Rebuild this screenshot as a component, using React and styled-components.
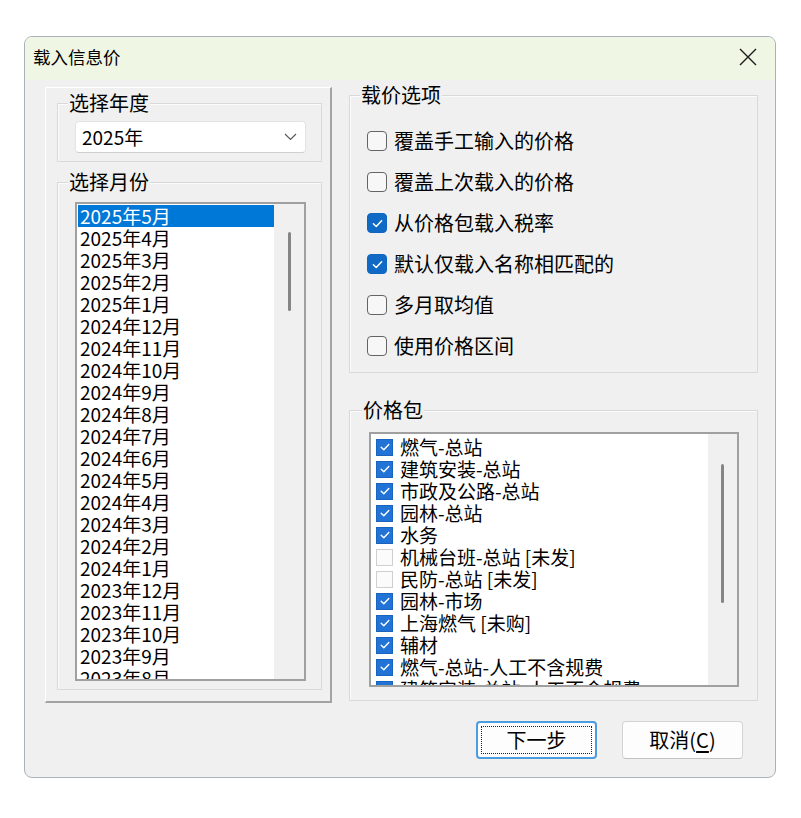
import React from 'react';
import styled, { createGlobalStyle } from 'styled-components';

// Data
const months = (() => {
	const list = [];
	let y = 2025;
	let m = 5;
	for (let i = 0; i < 24; i++) {
		list.push(`${ y }年${ m }月`);
		m -= 1;
		if (m === 0) { m = 12; y -= 1; }
	}
	return list;
})();

const options = [
	{ id: 1, text: '覆盖手工输入的价格', checked: false },
	{ id: 2, text: '覆盖上次载入的价格', checked: false },
	{ id: 3, text: '从价格包载入税率', checked: true },
	{ id: 4, text: '默认仅载入名称相匹配的', checked: true },
	{ id: 5, text: '多月取均值', checked: false },
	{ id: 6, text: '使用价格区间', checked: false },
];

const packs = [
	{ id: 1, text: '燃气-总站', checked: true },
	{ id: 2, text: '建筑安装-总站', checked: true },
	{ id: 3, text: '市政及公路-总站', checked: true },
	{ id: 4, text: '园林-总站', checked: true },
	{ id: 5, text: '水务', checked: true },
	{ id: 6, text: '机械台班-总站 [未发]', checked: false },
	{ id: 7, text: '民防-总站 [未发]', checked: false },
	{ id: 8, text: '园林-市场', checked: true },
	{ id: 9, text: '上海燃气 [未购]', checked: true },
	{ id: 10, text: '辅材', checked: true },
	{ id: 11, text: '燃气-总站-人工不含规费', checked: true },
	{ id: 12, text: '建筑安装-总站-人工不含规费', checked: true },
];

// Icons
const CheckMark = ({ size = 12 }) => (
	<svg width={ size } height={ size } viewBox="0 0 12 12">
		<path d="M2.2 6.3 L4.8 8.8 L9.8 3.4" fill="none" stroke="#fff" strokeWidth="1.4" strokeLinecap="round" strokeLinejoin="round" />
	</svg>
);

// Component
const App = () => {
	return(
		<>
			<GlobalStyle/>
			<Window>
				<TitleBar>
					<Title>载入信息价</Title>
					<CloseButton type="button">
						<svg width="18" height="18" viewBox="0 0 18 18">
							<path d="M1 1 L17 17 M17 1 L1 17" stroke="#1c1c1c" strokeWidth="1.4" />
						</svg>
					</CloseButton>
				</TitleBar>
				<Body>
					<TopRow>
						<LeftPanel>
							<YearGroup>
								<Legend>选择年度</Legend>
								<Combo>
									<span>2025年</span>
									<svg width="13" height="8" viewBox="0 0 13 8">
										<path d="M1 1 L6.5 6.5 L12 1" fill="none" stroke="#5a5a5a" strokeWidth="1.2" />
									</svg>
								</Combo>
							</YearGroup>
							<MonthGroup>
								<Legend>选择月份</Legend>
								<ListBox>
									<Items>
										{
											months.map((text, i) => (
												<MonthRow key={ text } $selected={ i === 0 }>{ text }</MonthRow>
											))
										}
									</Items>
									<ScrollTrack $top={ 28 }>
										<Thumb $height={ 79 }/>
									</ScrollTrack>
								</ListBox>
							</MonthGroup>
						</LeftPanel>
						<RightColumn>
							<OptionsGroup>
								<Legend>载价选项</Legend>
								<OptionList>
									{
										options.map((opt) => (
											<OptionRow key={ opt.id }>
												<RoundBox $checked={ opt.checked }>
													{ opt.checked && <CheckMark size={ 13 }/> }
												</RoundBox>
												{ opt.text }
											</OptionRow>
										))
									}
								</OptionList>
							</OptionsGroup>
							<PackGroup>
								<Legend>价格包</Legend>
								<ListBox>
									<Items $padLeft={ 5 } $padTop={ 2 }>
										{
											packs.map((pack) => (
												<PackRow key={ pack.id }>
													<SquareBox $checked={ pack.checked }>
														{ pack.checked && <CheckMark size={ 12 }/> }
													</SquareBox>
													{ pack.text }
												</PackRow>
											))
										}
									</Items>
									<ScrollTrack $top={ 30 } $width={ 29 }>
										<Thumb $height={ 139 }/>
									</ScrollTrack>
								</ListBox>
							</PackGroup>
						</RightColumn>
					</TopRow>
					<ButtonRow>
						<Button type="button" $default>
							<FocusRing>下一步</FocusRing>
						</Button>
						<Button type="button">
							<FocusRing $hidden>取消(<u>C</u>)</FocusRing>
						</Button>
					</ButtonRow>
				</Body>
			</Window>
		</>
	);
};

// Styled
const GlobalStyle = createGlobalStyle`
	html, body {
		margin: 0;
		background: #ffffff;
	}
	body {
		font-family: "Noto Sans CJK SC", "Noto Sans", sans-serif;
		color: #000;
	}
`;

const Window = styled.div`
	box-sizing: border-box;
	width: 752px;
	height: 742px;
	margin: 36px 0 0 24px;
	border: 1px solid #a9b1ba;
	border-radius: 8px;
	overflow: hidden;
	background: #f0f0f0;
	display: flex;
	flex-direction: column;
`;

const TitleBar = styled.div`
	box-sizing: border-box;
	height: 43px;
	flex: none;
	display: flex;
	align-items: center;
	justify-content: space-between;
	padding: 0 16px 3px 8px;
	background: #eff6e3;
`;

const Title = styled.div`
	font-size: 17.5px;
	line-height: 22px;
`;

const CloseButton = styled.button`
	display: flex;
	align-items: center;
	justify-content: center;
	width: 22px;
	height: 22px;
	padding: 0;
	border: none;
	background: transparent;
`;

const Body = styled.div`
	flex: 1;
	display: flex;
	flex-direction: column;
	padding: 7px 17px 0 20px;
	font-size: 20px;
`;

const TopRow = styled.div`
	display: flex;
	align-items: flex-start;
	gap: 17px;
`;

const LeftPanel = styled.div`
	box-sizing: border-box;
	width: 287px;
	height: 616px;
	display: flex;
	flex-direction: column;
	gap: 20px;
	padding: 15px 8px 11px 11px;
	border-top: 1px solid #ffffff;
	border-left: 1px solid #ffffff;
	border-right: 2px solid #a3a3a3;
	border-bottom: 2px solid #a3a3a3;
`;

const Group = styled.div`
	box-sizing: border-box;
	display: flex;
	flex-direction: column;
	border: 1px solid #d9d9d9;
	box-shadow: inset 1px 1px 0 #fbfbfb;
`;

const Legend = styled.div`
	align-self: flex-start;
	margin: -12px 0 0 -7px;
	padding: 0 1px;
	background: #f0f0f0;
	font-size: 20px;
	line-height: 22px;
	white-space: nowrap;
`;

const YearGroup = styled(Group)`
	padding: 0 15px 8px 17px;
`;

const Combo = styled.div`
	box-sizing: border-box;
	height: 32px;
	margin-top: 7px;
	display: flex;
	align-items: center;
	justify-content: space-between;
	padding: 0 8px 0 6px;
	background: #ffffff;
	border: 1px solid #e3e3e3;
	border-bottom-color: #cfcfcf;
	border-radius: 4px;
	font-size: 19px;
	line-height: 22px;
`;

const MonthGroup = styled(Group)`
	flex: 1;
	min-height: 0;
	padding: 0 15px 8px 17px;
	& > div:last-child {
		margin-top: 9px;
	}
`;

const ListBox = styled.div`
	box-sizing: border-box;
	flex: 1;
	min-height: 0;
	display: flex;
	background: #ffffff;
	border: 2px solid #a0a0a0;
	overflow: hidden;
`;

const Items = styled.div`
	flex: 1;
	min-width: 0;
	overflow: hidden;
	padding: ${ ({ $padTop }) => $padTop ?? 1 }px 0 0 ${ ({ $padLeft }) => $padLeft ?? 1 }px;
`;

const MonthRow = styled.div`
	height: 22px;
	line-height: 22px;
	padding-left: 2px;
	font-size: 19px;
	white-space: nowrap;
	background: ${ ({ $selected }) => $selected ? '#0078d7' : 'transparent' };
	color: ${ ({ $selected }) => $selected ? '#ffffff' : '#000000' };
`;

const ScrollTrack = styled.div`
	flex: none;
	width: ${ ({ $width }) => $width ?? 30 }px;
	background: #f0f0f0;
	padding-top: ${ ({ $top }) => $top }px;
	display: flex;
	justify-content: center;
`;

const Thumb = styled.div`
	width: 3px;
	height: ${ ({ $height }) => $height }px;
	border-radius: 2px;
	background: #858585;
`;

const RightColumn = styled.div`
	width: 409px;
	display: flex;
	flex-direction: column;
	gap: 37px;
	padding-top: 8px;
`;

const OptionsGroup = styled(Group)`
	height: 278px;
	padding: 0 17px 0 17px;
`;

const OptionList = styled.div`
	display: flex;
	flex-direction: column;
	gap: 17px;
	margin-top: 23px;
`;

const OptionRow = styled.label`
	display: flex;
	align-items: center;
	gap: 7px;
	height: 24px;
	font-size: 20px;
	line-height: 24px;
	white-space: nowrap;
`;

const RoundBox = styled.span`
	box-sizing: border-box;
	width: 20px;
	height: 20px;
	flex: none;
	display: flex;
	align-items: center;
	justify-content: center;
	border-radius: 4px;
	border: ${ ({ $checked }) => $checked ? '1px solid #0f66c2' : '1.5px solid #646464' };
	background: ${ ({ $checked }) => $checked ? '#1069c4' : '#f7f7f7' };
`;

const PackGroup = styled(Group)`
	height: 291px;
	padding: 0 18px 13px 19px;
	& > div:last-child {
		margin-top: 11px;
	}
`;

const PackRow = styled.div`
	display: flex;
	align-items: center;
	gap: 7px;
	height: 22px;
	line-height: 22px;
	font-size: 19px;
	white-space: nowrap;
`;

const SquareBox = styled.span`
	box-sizing: border-box;
	width: 17px;
	height: 17px;
	flex: none;
	display: flex;
	align-items: center;
	justify-content: center;
	border: 1px solid ${ ({ $checked }) => $checked ? '#1a64bf' : '#cfcfcf' };
	background: ${ ({ $checked }) => $checked ? '#2273d6' : '#fbfbfb' };
`;

const ButtonRow = styled.div`
	display: flex;
	justify-content: flex-end;
	gap: 25px;
	margin-top: 18px;
	padding-right: 15px;
`;

const Button = styled.button`
	box-sizing: border-box;
	width: 121px;
	height: 38px;
	padding: 3px;
	display: flex;
	align-items: stretch;
	background: #fdfdfd;
	border: ${ ({ $default }) => $default ? '2px solid #4c9ce0' : '1px solid #d3d3d3' };
	border-bottom-color: ${ ({ $default }) => $default ? '#4c9ce0' : '#c2c2c2' };
	border-radius: 4px;
	font-family: inherit;
	font-size: 20px;
	color: #000;
	u {
		text-underline-offset: 3px;
	}
`;

const FocusRing = styled.span`
	flex: 1;
	display: flex;
	align-items: center;
	justify-content: center;
	line-height: 22px;
	border: 1px dotted ${ ({ $hidden }) => $hidden ? 'transparent' : '#222' };
`;

// Export
export default App;
